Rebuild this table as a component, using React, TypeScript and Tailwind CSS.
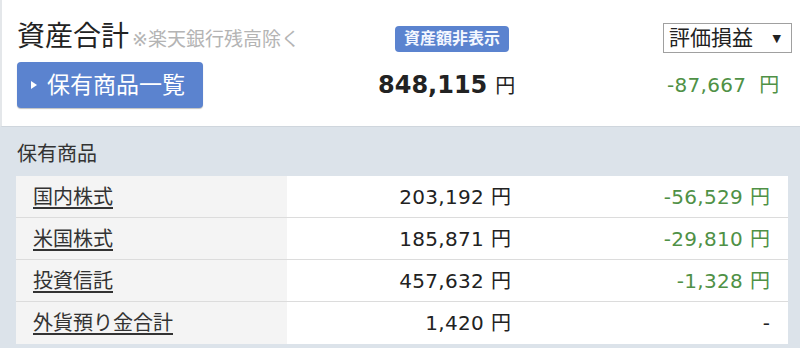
import React from "react";

const font = { fontFamily: '"DejaVu Sans", "Noto Sans CJK JP", sans-serif' };

const rows = [
  { name: "国内株式", amount: "203,192", pnl: "-56,529" },
  { name: "米国株式", amount: "185,871", pnl: "-29,810" },
  { name: "投資信託", amount: "457,632", pnl: "-1,328" },
  { name: "外貨預り金合計", amount: "1,420", pnl: null },
];

export default function App() {
  return (
    <div className="w-[800px] h-[348px] overflow-hidden bg-[#dce3ea] text-[#222]" style={font}>
      {/* summary */}
      <div className="h-[127px] bg-white border-l-2 border-[#e4e7ea] border-b border-b-[#cfd6dd] pl-[15px] pt-[19px]">
        <div className="grid grid-cols-[353px_290px_1fr] grid-rows-[36px_46px] gap-y-[7px] items-center">
          <div className="flex items-end leading-none">
            <span className="text-[28px]">資産合計</span>
            <span className="text-[19px] text-[#b4b4b4] ml-[3px] mb-[2px]">※楽天銀行残高除く</span>
          </div>
          <div>
            <span className="ml-[25px] inline-flex items-center h-[26px] px-[9px] mt-[3px] rounded-[4px] bg-[#5b83cf] text-[#f4f7ff] text-[16px] font-bold leading-none">
              資産額非表示
            </span>
          </div>
          <div>
            <div className="ml-[3px] mt-[2px] w-[129px] h-[30px] border border-[#a0a0a0] bg-white flex items-center justify-between pl-[5px] pr-[10px]">
              <span className="text-[21px] leading-none">評価損益</span>
              <span className="text-[11px] leading-none">▼</span>
            </div>
          </div>

          <button className="w-[186px] h-[46px] rounded-[4px] bg-[#5b83cf] shadow-[0_1px_1px_rgba(0,0,0,0.25)] text-white flex items-center pl-[14px]">
            <svg width="6" height="8" viewBox="0 0 6 8" className="mr-[10px]">
              <path d="M0 0 L6 4 L0 8 Z" fill="#fff" />
            </svg>
            <span className="text-[23px] leading-none">保有商品一覧</span>
          </button>
          <div className="ml-[8px] flex items-baseline whitespace-nowrap">
            <span className="text-[24px] font-bold">848,115</span>
            <span className="text-[20px] ml-[8px]">円</span>
          </div>
          <div className="ml-[7px] flex items-baseline whitespace-nowrap text-[#4f9146]">
            <span className="text-[20px] tracking-[0.3px]">-87,667</span>
            <span className="text-[20px] ml-[13px]">円</span>
          </div>
        </div>
      </div>

      {/* holdings */}
      <div className="pl-[16px] pr-[12px] pt-[13px]">
        <div className="text-[20px] leading-[28px] ml-[1px] text-[#333]">保有商品</div>
        <div className="mt-[8px] bg-white">
          {rows.map((r, i) => (
            <div
              key={r.name}
              className={`flex h-[42px] ${i < rows.length - 1 ? "border-b border-[#dcdcdc]" : ""}`}
            >
              <div className="w-[271px] bg-[#f4f4f4] flex items-center pl-[17px]">
                <a href="#" className="text-[20px] leading-none underline underline-offset-[3px] text-[#333]">
                  {r.name}
                </a>
              </div>
              <div className="w-[224px] flex items-center justify-end text-[20px] text-[#222] whitespace-nowrap">
                <span className="tracking-[0.3px]">{r.amount}</span>
                <span className="ml-[7px]">円</span>
              </div>
              <div className="flex-1 flex items-center justify-end pr-[18px] text-[20px] whitespace-nowrap">
                {r.pnl ? (
                  <span className="text-[#4f9146]">
                    <span className="tracking-[0.3px]">{r.pnl}</span>
                    <span className="ml-[7px]">円</span>
                  </span>
                ) : (
                  <span className="text-[#222]">-</span>
                )}
              </div>
            </div>
          ))}
        </div>
      </div>
    </div>
  );
}
